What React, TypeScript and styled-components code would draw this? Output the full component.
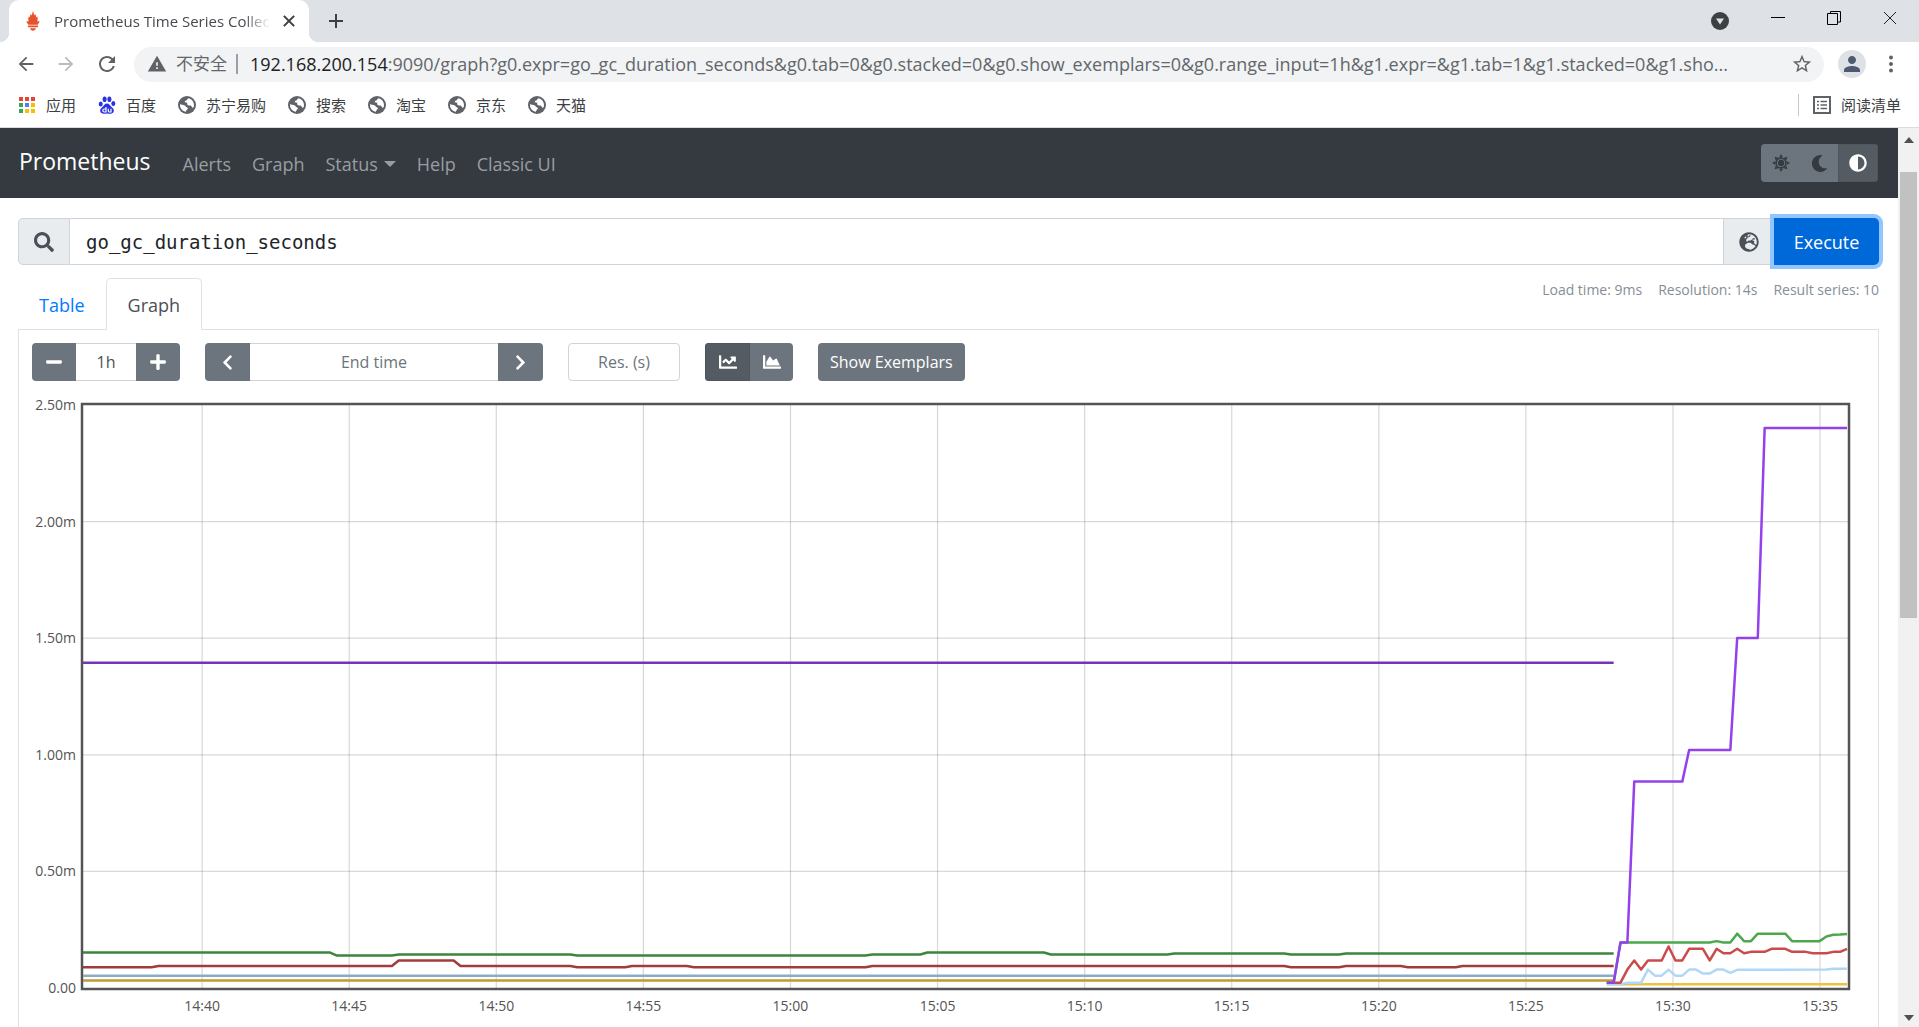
import React, { useLayoutEffect, useRef, useState } from "react";
import styled, { createGlobalStyle, css } from "styled-components";
import {
  FaAdjust,
  FaChartArea,
  FaChartLine,
  FaChevronLeft,
  FaChevronRight,
  FaGlobeEurope,
  FaMinus,
  FaMoon,
  FaPlus,
  FaSearch,
} from "react-icons/fa";
import { MdArrowBack, MdArrowForward, MdPerson, MdRefresh, MdStarBorder, MdWarning } from "react-icons/md";

const sans = `"Open Sans", "Noto Sans CJK SC", sans-serif`;
const mono = `"DejaVu Sans Mono", monospace`;

const GlobalStyle = createGlobalStyle`
  *, *::before, *::after { box-sizing: border-box; }
  body { margin: 0; background: #fff; color: #212529; font-family: ${sans}; overflow: hidden; }
  button, input { font-family: inherit; margin: 0; }
  button { cursor: pointer; }
  a { text-decoration: none; }
  svg { display: block; flex: none; }
`;

/* ---------- browser frame ---------- */

const Window = styled.div`
  display: flex;
  flex-direction: column;
  height: 100vh;
`;

const TabStrip = styled.header`
  display: flex;
  align-items: stretch;
  height: 42px;
  padding-left: 9px;
  background: #dee1e6;
  flex: none;
`;

const BrowserTab = styled.div`
  display: flex;
  align-items: center;
  width: 300px;
  padding: 0 14px 0 17px;
  background: #fff;
  border-radius: 10px 10px 0 0;
  position: relative;

  &::before,
  &::after {
    content: "";
    position: absolute;
    bottom: 0;
    width: 9px;
    height: 9px;
  }
  &::before {
    left: -9px;
    background: radial-gradient(circle at 0 0, transparent 9px, #fff 9px);
  }
  &::after {
    right: -9px;
    background: radial-gradient(circle at 100% 0, transparent 9px, #fff 9px);
  }
`;

const TabTitle = styled.span`
  flex: 1;
  min-width: 0;
  margin: 0 8px 0 14px;
  white-space: nowrap;
  font: 15px/22px ${sans};
  color: #45494d;
  mask-image: linear-gradient(to right, #000 86%, transparent 98%);
`;

const PlainButton = styled.button`
  display: flex;
  align-items: center;
  justify-content: center;
  padding: 0;
  border: 0;
  background: none;
  color: #5f6368;
`;

const NewTab = styled(PlainButton)`
  width: 16px;
  margin-left: 19px;
`;

const WindowControls = styled.div`
  display: flex;
  align-items: flex-start;
  margin-left: auto;
  padding: 11px 22px 0 0;
  gap: 42px;
`;

const Toolbar = styled.div`
  display: flex;
  align-items: center;
  height: 44px;
  padding: 0 24px 0 15px;
  flex: none;
`;

const NavButtons = styled.div`
  display: flex;
  gap: 18px;
  width: 119px;
`;

const AddressBar = styled.div`
  display: flex;
  align-items: center;
  flex: 1;
  min-width: 0;
  height: 35px;
  padding: 0 11px 0 13px;
  border-radius: 18px;
  background: #f1f3f4;
  color: #63676b;
  font: 18px/26px ${sans};
`;

const Security = styled.span`
  margin: 0 9px;
  font-size: 17px;
`;

const AddressRule = styled.span`
  width: 2px;
  height: 20px;
  margin-right: 12px;
  background: #9aa0a6;
`;

const Url = styled.span`
  flex: 1;
  min-width: 0;
  margin-right: 24px;
  overflow: hidden;
  text-overflow: ellipsis;
  white-space: nowrap;

  b {
    font-weight: 400;
    color: #202124;
  }
`;

const Avatar = styled(PlainButton)`
  width: 28px;
  height: 28px;
  margin: 0 21px 0 14px;
  border-radius: 50%;
  background: #dee1e6;
  color: #4d5a70;
`;

const Bookmarks = styled.nav`
  display: flex;
  align-items: center;
  gap: 22px;
  height: 42px;
  padding: 0 18px 4px;
  border-bottom: 1px solid #dadce0;
  flex: none;
`;

const Bookmark = styled.a`
  display: flex;
  align-items: center;
  gap: 10px;
  font: 15px/22px ${sans};
  color: #3c4043;
  white-space: nowrap;
`;

const ReadingList = styled(Bookmark)`
  margin-left: auto;
  padding-left: 14px;
  border-left: 1px solid #c4c7cb;
`;

/* ---------- page ---------- */

const Viewport = styled.div`
  display: flex;
  flex: 1;
  min-height: 0;
`;

const Page = styled.div`
  display: flex;
  flex-direction: column;
  flex: 1;
  min-width: 0;
  overflow: hidden;
`;

const Scrollbar = styled.div`
  display: flex;
  flex-direction: column;
  align-items: center;
  justify-content: space-between;
  width: 21px;
  padding: 9px 0 6px;
  background: #f1f1f1;
`;

const Thumb = styled.div`
  width: 17px;
  height: 50.5%;
  margin: 29px 0 auto;
  background: #c1c1c1;
`;

const Navbar = styled.nav`
  display: flex;
  align-items: center;
  height: 70px;
  padding: 0 20px 0 19px;
  background: #343a40;
  flex: none;
`;

const Brand = styled.a`
  margin: 0 32px 4px 0;
  font-size: 23px;
  line-height: 38px;
  color: #fff;
`;

const NavLink = styled.a<{ $caret?: boolean }>`
  display: flex;
  align-items: center;
  margin-right: 21px;
  padding-top: 2px;
  font-size: 18px;
  line-height: 30px;
  color: #9a9da0;
  white-space: nowrap;

  ${(p) =>
    p.$caret &&
    css`
      &::after {
        content: "";
        margin-left: 6px;
        border: 6px solid transparent;
        border-top-color: currentColor;
        border-bottom: 0;
      }
    `}
`;

const ButtonGroup = styled.div`
  display: flex;
  height: 38px;
  border-radius: 4px;
  overflow: hidden;
`;

const GroupButton = styled.button<{ $active?: boolean; $width: number; $ink?: string }>`
  display: flex;
  align-items: center;
  justify-content: center;
  width: ${(p) => p.$width}px;
  padding: 0;
  border: ${(p) => (p.$active ? "1px solid #4e555b" : "0")};
  background: ${(p) => (p.$active ? "#545b62" : "#6c757d")};
  color: ${(p) => p.$ink ?? "#fff"};
`;

const ThemeSwitch = styled(ButtonGroup)`
  margin-left: auto;
`;

const Main = styled.main`
  display: flex;
  flex-direction: column;
  flex: 1;
  min-height: 0;
  padding: 20px 19px 0 18px;
`;

const QueryRow = styled.form`
  display: flex;
  height: 47px;
  flex: none;
`;

const Addon = styled.label`
  display: flex;
  align-items: center;
  justify-content: center;
  width: 52px;
  border: 1px solid #ced4da;
  border-radius: 5px 0 0 5px;
  background: #e9ecef;
  color: #495057;
`;

const Expression = styled.input`
  flex: 1;
  min-width: 0;
  padding: 0 16px;
  border: solid #ced4da;
  border-width: 1px 0;
  outline: 0;
  background: #fff;
  color: #212529;
  font: 19px/28px ${mono};
`;

const ExplorerButton = styled.button`
  display: flex;
  align-items: center;
  justify-content: center;
  width: 51px;
  padding: 0;
  border: 1px solid #ced4da;
  background: #e9ecef;
  color: #495057;
`;

const Execute = styled.button`
  width: 105px;
  padding: 0;
  border: 0;
  border-radius: 0 5px 5px 0;
  background: #0069d9;
  box-shadow: 0 0 0 4px #93c5ff;
  color: #fff;
  font-size: 18px;
  line-height: 30px;
`;

const TabRow = styled.div`
  display: flex;
  align-items: flex-end;
  height: 65px;
  border-bottom: 1px solid #dee2e6;
  flex: none;
`;

const ViewTab = styled.button<{ $active?: boolean }>`
  height: 52px;
  margin-bottom: -1px;
  padding: 2px 20px 0;
  border: 1px solid transparent;
  border-radius: 5px 5px 0 0;
  background: none;
  color: #007bff;
  font-size: 18px;
  line-height: 30px;

  ${(p) =>
    p.$active &&
    css`
      padding: 2px 21px 0;
      border-color: #dee2e6 #dee2e6 #fff;
      background: #fff;
      color: #495057;
    `}
`;

const Stats = styled.div`
  display: flex;
  align-self: flex-start;
  gap: 16px;
  margin: 13px 0 0 auto;
  font-size: 14px;
  line-height: 24px;
  color: #868e96;
`;

const Panel = styled.section`
  flex: 1;
  min-height: 0;
  padding: 13px 12px 0 13px;
  border: solid #dee2e6;
  border-width: 0 1px;
`;

const Controls = styled.div`
  display: flex;
  gap: 25px;
  margin-bottom: 12px;
`;

const SmallInput = styled.input<{ $width: number; $boxed?: boolean }>`
  width: ${(p) => p.$width}px;
  height: 38px;
  padding: 0;
  border: solid #ced4da;
  border-width: ${(p) => (p.$boxed ? "1px" : "1px 0")};
  border-radius: ${(p) => (p.$boxed ? "4px" : "0")};
  background: #fff;
  outline: 0;
  color: #495057;
  font-size: 16px;
  line-height: 26px;
  text-align: center;

  &::placeholder {
    color: #6c757d;
    opacity: 1;
  }
`;

const Exemplars = styled.button`
  height: 38px;
  padding: 0 12px;
  border: 0;
  border-radius: 4px;
  background: #6c757d;
  color: #fff;
  font-size: 16px;
  line-height: 26px;
`;

const ChartSvg = styled.svg`
  width: 100%;
  height: 626px;

  text {
    font: 14px ${sans};
    fill: #545454;
  }
`;

/* ---------- chart ---------- */

type Point = [step: number, micros: number];
type Series = { color: string; points: Point[] };

const seriesList: Series[] = [
  { color: "#bd9b33", points: [[0, 32], [223, 32]] },
  { color: "#8cacc6", points: [[0, 53], [223, 53]] },
  {
    color: "#a23c3c",
    points: [
      [0, 89], [10, 89], [11, 94], [45, 94], [46, 118], [54, 118], [55, 94], [71, 94], [72, 89], [79, 89],
      [80, 94], [88, 94], [89, 89], [114, 89], [115, 94], [175, 94], [176, 89], [183, 89], [184, 94],
      [192, 94], [193, 89], [200, 89], [201, 94], [223, 94],
    ],
  },
  {
    color: "#3d853d",
    points: [
      [0, 152], [36, 152], [37, 139], [45, 139], [46, 144], [71, 144], [72, 139], [114, 139], [115, 144],
      [122, 144], [123, 152], [140, 152], [141, 144], [158, 144], [159, 148], [175, 148], [176, 144],
      [183, 144], [184, 148], [223, 148],
    ],
  },
  { color: "#7633bd", points: [[0, 1395], [223, 1395]] },
  { color: "#edc240", points: [[222, 16], [257, 16]] },
  {
    color: "#afd8f8",
    points: [
      [222, 16], [224, 16], [225, 23], [227, 23], [228, 79], [229, 53], [230, 53], [231, 79], [232, 53],
      [233, 53], [234, 79], [235, 79], [236, 62], [237, 62], [238, 79], [239, 79], [240, 65], [241, 78],
      [254, 79], [255, 83], [257, 83],
    ],
  },
  {
    color: "#cb4b4b",
    points: [
      [222, 23], [224, 23], [225, 79], [226, 118], [227, 79], [228, 118], [230, 118], [231, 178], [232, 118],
      [233, 118], [234, 168], [236, 168], [237, 118], [238, 168], [239, 149], [240, 149], [241, 168],
      [242, 149], [243, 155], [245, 155], [246, 168], [248, 168], [249, 155], [251, 155], [252, 149],
      [254, 149], [255, 155], [256, 155], [257, 168],
    ],
  },
  {
    color: "#4da74d",
    points: [
      [222, 23], [223, 23], [224, 195], [237, 195], [238, 201], [239, 195], [240, 195], [241, 233],
      [242, 201], [243, 201], [244, 233], [248, 233], [249, 201], [253, 201], [254, 221], [255, 228],
      [256, 229], [257, 232],
    ],
  },
  {
    color: "#9440ed",
    points: [
      [222, 23], [223, 23], [224, 195], [225, 195], [226, 885], [233, 885], [234, 1021], [240, 1021],
      [241, 1501], [244, 1501], [245, 2401], [257, 2401],
    ],
  },
];

const stepMinutes = 14 / 60;
const spanMinutes = 60;
const firstTick = 4.05;
const maxMicros = 2500;
const timeTicks = [
  "14:40", "14:45", "14:50", "14:55", "15:00", "15:05", "15:10", "15:15", "15:20", "15:25", "15:30", "15:35",
];
const valueTicks = [2500, 2000, 1500, 1000, 500, 0];
const inset = { left: 51, right: 18, top: 12 };
const plotHeight = 583;

function Chart() {
  const ref = useRef<SVGSVGElement>(null);
  const [width, setWidth] = useState(1834);

  useLayoutEffect(() => {
    const node = ref.current;
    if (!node) return;
    const measure = () => setWidth(node.getBoundingClientRect().width);
    measure();
    const observer = new ResizeObserver(measure);
    observer.observe(node);
    return () => observer.disconnect();
  }, []);

  const plotWidth = width - inset.left - inset.right;
  const bottom = inset.top + plotHeight;
  const x = (minutes: number) => inset.left + (minutes / spanMinutes) * plotWidth;
  const y = (micros: number) => bottom - (micros / maxMicros) * plotHeight;

  return (
    <ChartSvg ref={ref} role="img" aria-label="go_gc_duration_seconds">
      {timeTicks.map((label, i) => {
        const tx = x(firstTick + i * 5);
        return (
          <g key={label}>
            <line x1={tx} x2={tx} y1={inset.top} y2={bottom} stroke="#545454" strokeOpacity={0.22} strokeWidth={1.25} />
            <text x={tx} y={bottom + 23} textAnchor="middle">
              {label}
            </text>
          </g>
        );
      })}
      {valueTicks.map((value) => (
        <g key={value}>
          {value > 0 && value < maxMicros && (
            <line
              x1={inset.left}
              x2={inset.left + plotWidth}
              y1={y(value)}
              y2={y(value)}
              stroke="#545454"
              strokeOpacity={0.22}
              strokeWidth={1.25}
            />
          )}
          <text x={inset.left - 7} y={y(value) + 5} textAnchor="end">
            {value ? `${(value / 1000).toFixed(2)}m` : "0.00"}
          </text>
        </g>
      ))}
      <rect
        x={inset.left - 1}
        y={inset.top - 1}
        width={plotWidth + 2}
        height={plotHeight + 2}
        fill="none"
        stroke="#545454"
        strokeWidth={2.5}
      />
      {seriesList.map((series) => (
        <polyline
          key={series.color}
          points={series.points.map(([s, v]) => `${Math.min(x(s * stepMinutes), width - inset.right)},${y(v)}`).join(" ")}
          fill="none"
          stroke={series.color}
          strokeWidth={2.5}
          strokeLinejoin="round"
        />
      ))}
    </ChartSvg>
  );
}

/* ---------- drawings ---------- */

const Torch = () => (
  <svg width="14" height="20" viewBox="0 0 14 20" fill="#e6522c">
    <path d="M7 0c.8 2 .6 3 1.600 4.600C9 3.800 9 3.200 9 2.400 10 4 9.800 5.200 10.600 6.600 11 6 11.100 5.500 11 5 12 7 11.800 9 11.300 10.500L13.500 10c-.3 1.600-1 2.800-2 3.700h-9C1.500 12.800.8 11.600.5 10l2.200.5C2.200 9 2 7 3 5c-.1.500 0 1 .4 1.600C4.200 5.200 4 4 5 2.400c0 .8 0 1.400.4 2.200C6.400 3 6.200 2 7 0z" />
    <path d="M2 14.600h10v1.700H2zM4 17.300h6c-.4 1.500-1.500 2.500-3 2.500s-2.600-1-3-2.500z" />
  </svg>
);

const Cross = ({ size, weight, color }: { size: number; weight: number; color: string }) => (
  <svg width={size} height={size} viewBox="0 0 14 14" stroke={color} strokeWidth={weight}>
    <path d="M1 1l12 12M13 1L1 13" />
  </svg>
);

const PlusMark = () => (
  <svg width="16" height="16" viewBox="0 0 16 16" stroke="#3c4043" strokeWidth="2">
    <path d="M8 1v14M1 8h14" />
  </svg>
);

const AppsGrid = () => {
  const colors = ["#ea4335", "#ea4335", "#ea4335", "#34a853", "#4285f4", "#fbbc04", "#34a853", "#fbbc04", "#fbbc04"];
  return (
    <svg width="18" height="18" viewBox="0 0 18 18">
      {colors.map((c, i) => (
        <rect key={i} x={1 + (i % 3) * 6} y={1 + Math.floor(i / 3) * 6} width="4" height="4" fill={c} />
      ))}
    </svg>
  );
};

const Paw = () => (
  <svg width="18" height="18" viewBox="0 0 18 18" fill="#2932e1">
    <ellipse cx="2.700" cy="8" rx="2" ry="2.600" />
    <ellipse cx="6.600" cy="3.300" rx="2" ry="2.800" />
    <ellipse cx="11.400" cy="3.300" rx="2" ry="2.800" />
    <ellipse cx="15.300" cy="7.600" rx="2" ry="2.500" />
    <path d="M9 7.500c2.300 0 3 2 4.500 3.400 1.800 1.600 2.500 2.600 2.300 4.200-.2 2-1.800 2.800-3.600 2.700-1.200 0-2-.3-3.200-.3s-2 .3-3.200.3c-1.800 0-3.400-.8-3.600-2.700-.2-1.600.5-2.600 2.300-4.200C6 9.500 6.700 7.500 9 7.500z" />
    <path d="M8 11v5H6.300a1.400 1.400 0 010-3H8M10.300 12.700v2.300q0 1 1 1h1.700v-3.300" fill="none" stroke="#fff" strokeWidth="1.200" />
  </svg>
);

const SiteGlobe = () => (
  <svg width="18" height="18" viewBox="0 0 18 18">
    <circle cx="9" cy="9" r="9" fill="#5f6368" />
    <path
      d="M10.800 2.200c3 .8 5.200 3.600 5.200 6.800 0 .9-.1 1.600-.4 2.300-.7.600-1.600.4-1.900-.5-.3-1-1.100-1.500-2.200-1.400-1.700.1-2.400-.6-2.200-1.700.1-.9-.6-1.100-1.500-1.100-1 0-1.300-.8-.7-1.500.6-.6 1.500-.4 1.900-1.100.4-.8.800-1.800 1.800-1.800z"
      fill="#fff"
    />
    <path
      d="M2.100 8.200l4.200 1.100c1.500.4 1.200 1.600 2.300 1.900 1.300.3 1.600 1.200.8 2-.8.700-1.200 1.100-1.500 2.600C4.500 15.300 2 12.500 2 9z"
      fill="#fff"
    />
  </svg>
);

const ListIcon = () => (
  <svg width="18" height="18" viewBox="0 0 18 18" fill="none" stroke="#5f6368">
    <rect x="1" y="1" width="16" height="16" strokeWidth="2" />
    <path d="M4 5.500h2M4 9h2M4 12.500h2M7.500 5.500H14M7.500 9H14M7.500 12.500H14" strokeWidth="1.600" />
  </svg>
);

const SunIcon = () => (
  <svg width="18" height="18" viewBox="-9 -9 18 18" fill="#343a40">
    {[0, 45, 90, 135, 180, 225, 270, 315].map((a) => (
      <path key={a} d="M0 -9L2 -5.500H-2z" transform={`rotate(${a})`} />
    ))}
    <circle r="4.800" fill="none" stroke="#343a40" strokeWidth="1.400" />
    <circle r="3.200" />
  </svg>
);

const Triangle = ({ down }: { down?: boolean }) => (
  <svg width="10" height="6" viewBox="0 0 10 6" fill="#505050">
    <path d={down ? "M0 0h10L5 6z" : "M0 6h10L5 0z"} />
  </svg>
);

/* ---------- app ---------- */

const sites = ["苏宁易购", "搜索", "淘宝", "京东", "天猫"];

export default function App() {
  return (
    <Window>
      <GlobalStyle />
      <TabStrip>
        <BrowserTab>
          <Torch />
          <TabTitle>Prometheus Time Series Collec</TabTitle>
          <PlainButton aria-label="Close tab">
            <Cross size={12} weight={2.4} color="#3c4043" />
          </PlainButton>
        </BrowserTab>
        <NewTab aria-label="New tab">
          <PlusMark />
        </NewTab>
        <WindowControls>
          <PlainButton aria-label="Search tabs">
            <svg width="18" height="19" viewBox="0 0 18 19">
              <circle cx="9" cy="10" r="9" fill="#3c4043" />
              <path d="M5 7.500h8L9 13.500z" fill="#dee1e6" />
            </svg>
          </PlainButton>
          <PlainButton aria-label="Minimize">
            <svg width="14" height="14" viewBox="0 0 14 14" stroke="#000">
              <path d="M0 6.500h14" />
            </svg>
          </PlainButton>
          <PlainButton aria-label="Restore">
            <svg width="14" height="14" viewBox="0 0 14 14" fill="none" stroke="#000">
              <path d="M.5 2.500h10v11H.5zM3.500 2.500v-2h10v10.500h-2.500" />
            </svg>
          </PlainButton>
          <PlainButton aria-label="Close window">
            <Cross size={14} weight={1} color="#222" />
          </PlainButton>
        </WindowControls>
      </TabStrip>

      <Toolbar>
        <NavButtons>
          <PlainButton aria-label="Back">
            <MdArrowBack size={22} />
          </PlainButton>
          <PlainButton aria-label="Forward">
            <MdArrowForward size={22} color="#babcbe" />
          </PlainButton>
          <PlainButton aria-label="Reload">
            <MdRefresh size={24} />
          </PlainButton>
        </NavButtons>
        <AddressBar>
          <MdWarning size={20} color="#5f6368" />
          <Security>不安全</Security>
          <AddressRule />
          <Url>
            <b>192.168.200.154</b>
            :9090/graph?g0.expr=go_gc_duration_seconds&amp;g0.tab=0&amp;g0.stacked=0&amp;g0.show_exemplars=0&amp;g0.range_input=1h&amp;g1.expr=&amp;g1.tab=1&amp;g1.stacked=0&amp;g1.sho...
          </Url>
          <PlainButton aria-label="Bookmark this page">
            <MdStarBorder size={22} />
          </PlainButton>
        </AddressBar>
        <Avatar aria-label="Profile">
          <MdPerson size={24} />
        </Avatar>
        <PlainButton aria-label="Menu">
          <svg width="8" height="18" viewBox="0 0 8 18" fill="#5f6368">
            <circle cx="4" cy="2.500" r="2" />
            <circle cx="4" cy="9" r="2" />
            <circle cx="4" cy="15.500" r="2" />
          </svg>
        </PlainButton>
      </Toolbar>

      <Bookmarks>
        <Bookmark href="#">
          <AppsGrid />
          应用
        </Bookmark>
        <Bookmark href="#">
          <Paw />
          百度
        </Bookmark>
        {sites.map((name) => (
          <Bookmark href="#" key={name}>
            <SiteGlobe />
            {name}
          </Bookmark>
        ))}
        <ReadingList href="#">
          <ListIcon />
          阅读清单
        </ReadingList>
      </Bookmarks>

      <Viewport>
        <Page>
          <Navbar>
            <Brand href="#">Prometheus</Brand>
            <NavLink href="#">Alerts</NavLink>
            <NavLink href="#">Graph</NavLink>
            <NavLink href="#" $caret>
              Status
            </NavLink>
            <NavLink href="#">Help</NavLink>
            <NavLink href="#">Classic UI</NavLink>
            <ThemeSwitch>
              <GroupButton $width={39} $ink="#343a40" aria-label="Light theme">
                <SunIcon />
              </GroupButton>
              <GroupButton $width={38} $ink="#343a40" aria-label="Dark theme">
                <FaMoon size={17} />
              </GroupButton>
              <GroupButton $width={40} $active aria-label="Browser theme">
                <FaAdjust size={18} />
              </GroupButton>
            </ThemeSwitch>
          </Navbar>

          <Main>
            <QueryRow onSubmit={(e) => e.preventDefault()}>
              <Addon htmlFor="expression" aria-label="Expression">
                <FaSearch size={20} />
              </Addon>
              <Expression id="expression" defaultValue="go_gc_duration_seconds" spellCheck={false} />
              <ExplorerButton type="button" aria-label="Open metrics explorer">
                <FaGlobeEurope size={20} />
              </ExplorerButton>
              <Execute type="submit">Execute</Execute>
            </QueryRow>

            <TabRow>
              <ViewTab>Table</ViewTab>
              <ViewTab $active>Graph</ViewTab>
              <Stats>
                <span>Load time: 9ms</span>
                <span>Resolution: 14s</span>
                <span>Result series: 10</span>
              </Stats>
            </TabRow>

            <Panel>
              <Controls>
                <ButtonGroup>
                  <GroupButton $width={44} aria-label="Decrease range">
                    <FaMinus size={18} />
                  </GroupButton>
                  <SmallInput $width={60} defaultValue="1h" aria-label="Range" />
                  <GroupButton $width={44} aria-label="Increase range">
                    <FaPlus size={18} />
                  </GroupButton>
                </ButtonGroup>
                <ButtonGroup>
                  <GroupButton $width={45} aria-label="Earlier">
                    <FaChevronLeft size={17} />
                  </GroupButton>
                  <SmallInput $width={248} placeholder="End time" aria-label="End time" />
                  <GroupButton $width={45} aria-label="Later">
                    <FaChevronRight size={17} />
                  </GroupButton>
                </ButtonGroup>
                <SmallInput $width={112} $boxed placeholder="Res. (s)" aria-label="Resolution in seconds" />
                <ButtonGroup>
                  <GroupButton $width={45} $active aria-label="Line graph">
                    <FaChartLine size={18} />
                  </GroupButton>
                  <GroupButton $width={43} aria-label="Stacked graph">
                    <FaChartArea size={18} />
                  </GroupButton>
                </ButtonGroup>
                <Exemplars>Show Exemplars</Exemplars>
              </Controls>
              <Chart />
            </Panel>
          </Main>
        </Page>
        <Scrollbar>
          <Triangle />
          <Thumb />
          <Triangle down />
        </Scrollbar>
      </Viewport>
    </Window>
  );
}
